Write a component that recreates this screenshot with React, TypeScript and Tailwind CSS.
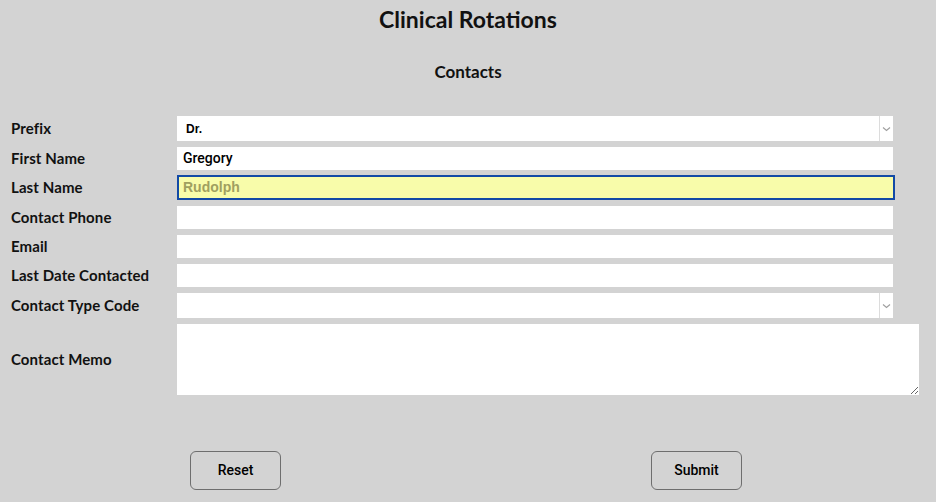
import React from "react";

function Chevron() {
  return (
    <svg width="9" height="6" viewBox="0 0 9 6" className="block">
      <path d="M1 1.5 L4.5 4.5 L8 1.5" fill="none" stroke="#a0a0a0" strokeWidth="1.2" />
    </svg>
  );
}

function Label({ children }: { children: React.ReactNode }) {
  return (
    <div className="w-[177px] shrink-0 pl-[11px] text-[15px] tracking-[0.1px] font-bold text-[#111] [font-family:Lato,'Noto_Sans',sans-serif]">
      {children}
    </div>
  );
}

export default function App() {
  return (
    <div className="w-[936px] h-[502px] bg-[#d3d3d3] overflow-hidden [font-family:Lato,sans-serif]">
      <h1 className="pt-[5px] text-center text-[23px] leading-[28px] font-bold text-[#111]">
        Clinical Rotations
      </h1>
      <h2 className="mt-[28px] text-center text-[17px] leading-[22px] font-bold text-[#111]">
        Contacts
      </h2>

      <div className="mt-[33px] flex flex-col">
        <div className="flex items-center h-[25px]">
          <Label>Prefix</Label>
          <div className="w-[716px] h-[25px] bg-white flex items-center">
            <span className="flex-1 pl-[9px] text-[12px] font-bold text-black [font-family:'Liberation_Sans',Arial,sans-serif]">
              Dr.
            </span>
            <div className="w-[14px] h-full border-l border-[#dcdcdc] flex items-center justify-center">
              <Chevron />
            </div>
          </div>
        </div>

        <div className="mt-[6px] flex items-center h-[23px]">
          <Label>First Name</Label>
          <div className="w-[716px] h-[23px] bg-white flex items-center pl-[6px] text-[14px] text-black [font-family:Roboto,Arial,sans-serif] font-medium">
            Gregory
          </div>
        </div>

        <div className="mt-[5px] flex items-center h-[25px]">
          <Label>Last Name</Label>
          <div className="w-[718px] h-[25px] bg-[#f8fcaa] border-[2px] border-[#124aa6] flex items-center pl-[4px] text-[14px] font-bold text-[#a0a060] [font-family:'Liberation_Sans',Arial,sans-serif]">
            Rudolph
          </div>
        </div>

        <div className="mt-[6px] flex items-center h-[23px]">
          <Label>Contact Phone</Label>
          <div className="w-[716px] h-[23px] bg-white" />
        </div>

        <div className="mt-[6px] flex items-center h-[23px]">
          <Label>Email</Label>
          <div className="w-[716px] h-[23px] bg-white" />
        </div>

        <div className="mt-[6px] flex items-center h-[23px]">
          <Label>Last Date Contacted</Label>
          <div className="w-[716px] h-[23px] bg-white" />
        </div>

        <div className="mt-[6px] flex items-center h-[25px]">
          <Label>Contact Type Code</Label>
          <div className="w-[716px] h-[25px] bg-white flex items-center">
            <span className="flex-1" />
            <div className="w-[14px] h-full border-l border-[#dcdcdc] flex items-center justify-center">
              <Chevron />
            </div>
          </div>
        </div>

        <div className="mt-[6px] flex items-center h-[71px]">
          <Label>Contact Memo</Label>
          <textarea
            className="w-[742px] h-[71px] bg-white outline-none block"
            defaultValue=""
          />
        </div>
      </div>

      <div className="mt-[56px] flex">
        <button className="ml-[190px] w-[91px] h-[39px] rounded-[6px] border border-[#6e6e6e] bg-transparent text-[14px] font-medium text-black [font-family:Roboto,sans-serif]">
          Reset
        </button>
        <button className="ml-[370px] w-[91px] h-[39px] rounded-[6px] border border-[#6e6e6e] bg-transparent text-[14px] font-medium text-black [font-family:Roboto,sans-serif]">
          Submit
        </button>
      </div>
    </div>
  );
}
